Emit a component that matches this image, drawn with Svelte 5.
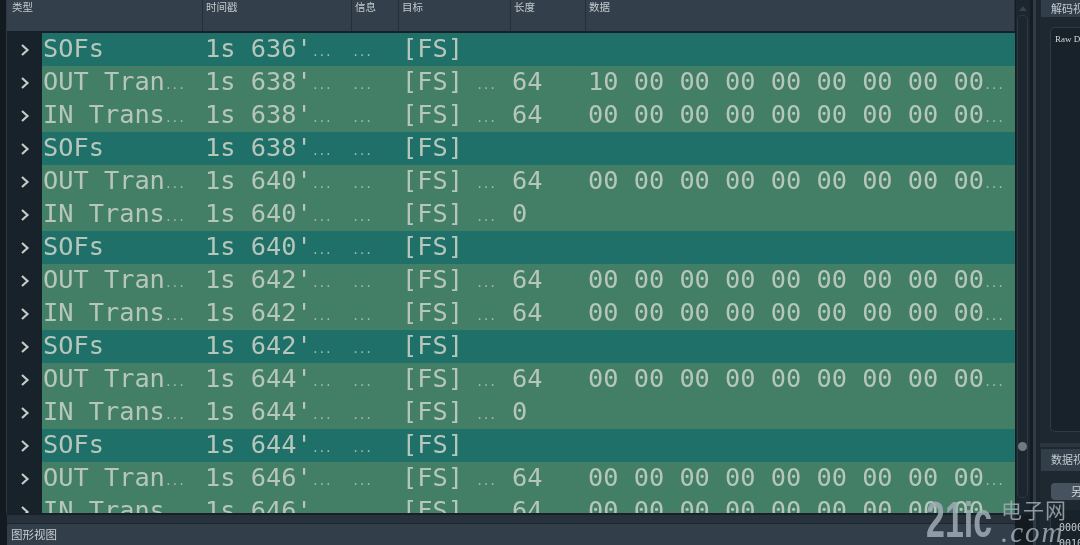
<script>
	const sof = { type: 'SOFs', short: false };
	const outT = { type: 'OUT Tran', short: true };
	const inT = { type: 'IN Trans', short: true };
	const zeros = '00 00 00 00 00 00 00 00 00';

	const rows = [
		{ ...sof, time: 636 },
		{ ...outT, time: 638, len: '64', data: '10 00 00 00 00 00 00 00 00' },
		{ ...inT, time: 638, len: '64', data: zeros },
		{ ...sof, time: 638 },
		{ ...outT, time: 640, len: '64', data: zeros },
		{ ...inT, time: 640, len: '0' },
		{ ...sof, time: 640 },
		{ ...outT, time: 642, len: '64', data: zeros },
		{ ...inT, time: 642, len: '64', data: zeros },
		{ ...sof, time: 642 },
		{ ...outT, time: 644, len: '64', data: zeros },
		{ ...inT, time: 644, len: '0' },
		{ ...sof, time: 644 },
		{ ...outT, time: 646, len: '64', data: zeros },
		{ ...inT, time: 646, len: '64', data: zeros },
	];

	const columns = [
		{ name: '类型', width: 196 },
		{ name: '时间戳', width: 149 },
		{ name: '信息', width: 47 },
		{ name: '目标', width: 112 },
		{ name: '长度', width: 75 },
		{ name: '数据', width: 429 },
	];
</script>

<div class="window">
	<div class="main">
		<div class="left">
			<div class="table-frame">
				<div class="table">
					<div class="header">
						{#each columns as col}
							<div class="col" style="width: {col.width}px">{col.name}</div>
						{/each}
					</div>
					<div class="body">
						{#each rows as row}
							<div class="row">
								<div class="gutter">
									<svg width="10" height="14" viewBox="0 0 10 14">
										<path d="M2 2l5.5 5L2 12" fill="none" stroke="#c4cbc9" stroke-width="2.2" />
									</svg>
								</div>
								<div class="cells" class:sof={!row.short}>
									<div class="cell type">{row.type}{#if row.short}<span class="dots">...</span>{/if}</div>
									<div class="cell time">1s {row.time}'<span class="dots">...</span></div>
									<div class="cell info"><span class="dots">...</span></div>
									<div class="cell target">[FS]</div>
									<div class="cell more">{#if row.len}<span class="dots">...</span>{/if}</div>
									<div class="cell len">{row.len ?? ''}</div>
									<div class="cell data">{#if row.data}{row.data}<span class="dots">...</span>{/if}</div>
								</div>
							</div>
						{/each}
					</div>
				</div>
				<div class="scrollbar">
					<div class="arrow"></div>
					<div class="track"></div>
					<div class="knob"></div>
				</div>
			</div>
			<div class="graph-area">
				<div class="graph-tab">图形视图</div>
			</div>
		</div>
		<div class="splitter"></div>
		<div class="side">
			<div class="side-tab">解码视图</div>
			<div class="decode-box"><span>Raw Data</span></div>
			<div class="side-band"></div>
			<div class="side-tab second">数据视图</div>
			<div class="side-btn">另存</div>
			<div class="hex-box">
				<div>0000</div>
				<div>0010</div>
			</div>
		</div>
	</div>
	<div class="watermark">
		<span class="mark">21ic</span>
		<span class="mark-side">
			<span class="cn">电子网</span>
			<span class="com">.com</span>
		</span>
	</div>
</div>

<style>
:global(body) {
	margin: 0;
	background: #1b252d;
	overflow: hidden;
}

.window {
	position: relative;
	width: 1080px;
	height: 545px;
	overflow: hidden;
	background: #1b252d;
	font-family: 'DejaVu Sans Mono', monospace;
	filter: blur(0.5px);
}

.main {
	display: flex;
	height: 100%;
}

.left {
	width: 1030px;
	flex: none;
	display: flex;
	flex-direction: column;
	padding-left: 6px;
	box-sizing: border-box;
	background: #131a20;
}

.table-frame {
	display: flex;
	height: 515px;
	flex: none;
	border-left: 1px solid #2c3741;
	border-bottom: 2px solid #182028;
	box-sizing: border-box;
}

.table {
	width: 1008px;
	flex: none;
	display: flex;
	flex-direction: column;
	overflow: hidden;
}

.header {
	height: 31px;
	flex: none;
	display: flex;
	background: #333f4b;
	border-bottom: 2px solid #18212a;
}

.col {
	flex: none;
	box-sizing: border-box;
	padding: 0 0 0 3px;
	border-right: 1px solid #252f39;
	color: #c3cacf;
	font: 10.5px/14px 'Noto Sans CJK SC', sans-serif;
}

.col:first-child {
	padding-left: 5px;
}

.body {
	flex: 1;
	overflow: hidden;
}

.row {
	display: flex;
	height: 33px;
}

.gutter {
	width: 35px;
	flex: none;
	display: flex;
	align-items: center;
	justify-content: center;
	background: #18222a;
	padding-left: 1px;
	box-sizing: border-box;
}

.cells {
	flex: 1;
	display: grid;
	grid-template-columns: 163px 147px 50px 74px 36px 76px 1fr;
	background: #437f66;
	color: #b7c6bb;
	font-size: 25.3px;
	line-height: 32px;
	white-space: nowrap;
	overflow: hidden;
}

.cells.sof {
	background: #1f7068;
}

.cell {
	overflow: hidden;
}

.cell.type {
	padding-left: 1px;
}

.dots {
	display: inline-block;
	color: #a3b7ac;
	font-size: 12px;
	letter-spacing: -0.7px;
	transform: translateY(-1px);
}

.scrollbar {
	position: relative;
	width: 15px;
	flex: none;
	background: #1c262e;
	border-left: 1px solid #141c22;
	box-sizing: border-box;
}

.arrow {
	width: 0;
	height: 0;
	margin: 6px auto 0;
	border: 4px solid transparent;
	border-top: 0;
	border-bottom: 5px solid #36424c;
}

.track {
	position: absolute;
	top: 15px;
	left: 1px;
	right: 2px;
	bottom: 15px;
	border: 1px solid #2d3842;
	border-radius: 5px;
}

.knob {
	position: absolute;
	left: 2px;
	top: 442px;
	width: 9px;
	height: 9px;
	border-radius: 50%;
	background: #6d7a7f;
}

.graph-area {
	flex: 1;
	margin-left: 1px;
	margin-right: 15px;
	padding-top: 8px;
	display: flex;
	background: #27323c;
}

.graph-tab {
	flex: 1;
	padding-left: 4px;
	background: #323e4a;
	border-top: 1px solid #1c252d;
	border-radius: 3px 3px 0 0;
	color: #c7ced2;
	font: 11.5px/20px 'Noto Sans CJK SC', sans-serif;
}

.splitter {
	width: 10px;
	flex: none;
	box-sizing: border-box;
	background: #1b252d;
	border-left: 3px solid #141c22;
	border-right: 3px solid #1b252d;
	box-shadow: inset 3px 0 0 #303b46;
}

.side {
	flex: 1;
	min-width: 0;
	display: flex;
	flex-direction: column;
	overflow: hidden;
	background: #1e2830;
	white-space: nowrap;
}

.side-tab {
	height: 17px;
	flex: none;
	margin-left: 1px;
	padding-left: 10px;
	background: #323e4a;
	color: #c3cacf;
	font: 11px/16px 'Noto Sans CJK SC', sans-serif;
}

.side-tab.second {
	height: 22px;
	margin-top: 2px;
	line-height: 21px;
}

.side-band {
	height: 4px;
	flex: none;
	margin-top: 11px;
	background: #2b3641;
}

.decode-box {
	height: 405px;
	flex: none;
	margin: 10px 0 0 10px;
	padding: 5px 4px;
	box-sizing: border-box;
	background: #18222a;
	border: 1px solid #2f3a44;
	border-right: 0;
	border-radius: 5px 0 0 5px;
	color: #d5dadc;
	font: 9px/12px 'Liberation Serif', serif;
}

.side-btn {
	height: 17px;
	flex: none;
	margin: 12px 0 0 11px;
	padding-left: 20px;
	background: #46525d;
	border-radius: 4px 0 0 4px;
	color: #d3d8db;
	font: 11px/17px 'Noto Sans CJK SC', sans-serif;
}

.hex-box {
	flex: 1;
	margin: 10px 0 0 10px;
	padding: 10px 0 0 8px;
	background: #18222a;
	border-left: 1px solid #2f3a44;
	color: #c8ced1;
	font: 10px/16px 'DejaVu Sans Mono', monospace;
}

.watermark {
	position: absolute;
	left: 926px;
	top: 496px;
	display: flex;
	color: #a2acb5;
	opacity: 0.85;
	white-space: nowrap;
}

.mark {
	display: inline-block;
	width: 75px;
	font: 700 50px/48px 'Liberation Sans', sans-serif;
	transform: scaleX(0.68);
	transform-origin: left;
}

.mark-side {
	display: flex;
	flex-direction: column;
}

.cn {
	font: 21px/26px 'Noto Sans CJK SC', sans-serif;
	letter-spacing: 1px;
}

.com {
	font: italic 400 29px/20px 'Liberation Serif', serif;
	letter-spacing: 2px;
}
</style>
